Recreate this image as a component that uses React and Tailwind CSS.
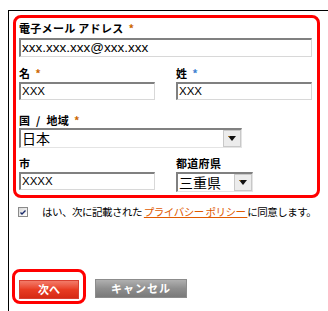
import React from 'react';

const jp = { fontFamily: '"Noto Sans CJK JP", sans-serif' };
const latin = { fontFamily: '"Liberation Sans", Arial, sans-serif' };

const Label = ({ text, star, starColor = "text-[#cc6600]", className = "" }) => (
    <div className={"h-[14px] leading-[14px] text-[11px] font-bold text-black whitespace-nowrap tracking-[0.3px] " + className} style={jp}>
        {text}
        {star && <span className={"ml-[5px] " + starColor}>*</span>}
    </div>
);

const Field = ({ value, className = "", textClass = "text-[11px]" }) => (
    <div className={"flex items-center bg-white border-t-2 border-l-2 border-t-[#808080] border-l-[#808080] border-b border-r border-b-[#d8d8d8] border-r-[#d8d8d8] pl-[1px] text-black " + className}>
        <span className={textClass} style={latin}>{value}</span>
    </div>
);

const Select = ({ value, className = "" }) => (
    <div className={"flex items-stretch bg-white border-t-2 border-l-2 border-t-[#808080] border-l-[#808080] border-b border-r border-b-[#e4e4e4] border-r-[#e4e4e4] " + className}>
        <div className="flex-1 flex items-center pl-[1px] text-[14px] text-black" style={jp}>{value}</div>
        <div className="w-[18px] flex items-center justify-center bg-[#ececec] border border-[#c8c8c8]">
            <svg width="8" height="5" viewBox="0 0 8 5">
                <path d="M0 0 H8 L4 5 Z" fill="#111" />
                <path d="M0 0 H2 L1 1 Z" fill="#e08a00" />
            </svg>
        </div>
    </div>
);

const App = () => {
    return (
        <div className="w-[328px] h-[311px] overflow-hidden bg-white pt-[10px] pl-[8px]">
            <div className="h-[320px] border-l border-t border-black pl-[4px] pt-[4px]">
                {/* form block with red highlight */}
                <div className="w-[307px] h-[183px] border-[3px] border-[#ff0000] rounded-[8px] pl-[3px] pt-[3px]">
                    <Label text="電子メール アドレス" star />
                    <Field value="xxx.xxx.xxx@xxx.xxx" textClass="text-[13.5px]" className="mt-[3px] w-[293px] h-[19px]" />

                    <div className="flex gap-[21px] mt-[9px]">
                        <div>
                            <Label text="名" star />
                            <Field value="XXX" textClass="text-[11.5px]" className="mt-[2px] w-[136px] h-[18px]" />
                        </div>
                        <div>
                            <Label text="姓" star starColor="text-[#3b7fd0]" />
                            <Field value="XXX" textClass="text-[11.5px]" className="mt-[2px] w-[136px] h-[18px]" />
                        </div>
                    </div>

                    <Label text="国 / 地域" star className="mt-[13px] [word-spacing:3px]" />
                    <Select value="日本" className="mt-[1px] w-[223px] h-[20px]" />

                    <div className="flex gap-[21px] mt-[8px]">
                        <div>
                            <Label text="市" />
                            <Field value="XXXX" textClass="text-[11.5px]" className="mt-[2px] w-[136px] h-[18px]" />
                        </div>
                        <div>
                            <Label text="都道府県" />
                            <Select value="三重県" className="mt-[2px] w-[77px] h-[20px]" />
                        </div>
                    </div>
                </div>

                {/* privacy agreement */}
                <div className="flex items-center mt-[7px] ml-[5px] h-[14px]">
                    <div className="w-[10px] h-[10px] border border-[#8a8a8a] bg-gradient-to-br from-[#d8d8d8] to-white flex items-center justify-center">
                        <svg width="6" height="5" viewBox="0 0 6 5">
                            <path d="M0.5 2.5 L2 4 L5.5 0.5" stroke="#1a2a6a" strokeWidth="1.4" fill="none" />
                        </svg>
                    </div>
                    <div className="ml-[14px] text-[10.5px] leading-[14px] text-black whitespace-nowrap tracking-[-0.5px]" style={jp}>
                        はい、次に記載された <a href="#" className="text-[#e05a00] underline">プライバシー ポリシー </a>に同意します。
                    </div>
                </div>

                {/* buttons */}
                <div className="flex items-start mt-[50px] -ml-[1px]">
                    <div className="flex items-start w-[74px] h-[35px] border-[3px] border-[#ff0000] rounded-[8px] pl-[4px] pt-[8px]">
                        <button className="flex items-center justify-center w-[60px] h-[19px] border border-[#d84030] bg-gradient-to-b from-[#f27a68] via-[#e83c22] to-[#d62a14] text-white text-[11px] font-bold leading-none" style={jp}>
                            次へ
                        </button>
                    </div>
                    <button className="flex items-center justify-center ml-[9px] mt-[10px] w-[92px] h-[19px] border border-[#8c8c8c] bg-gradient-to-b from-[#b0b0b0] via-[#8e8e8e] to-[#7a7a7a] text-white text-[11px] font-bold leading-none tracking-[1px]" style={jp}>
                        キャンセル
                    </button>
                </div>
            </div>
        </div>
    );
};

export default App;
